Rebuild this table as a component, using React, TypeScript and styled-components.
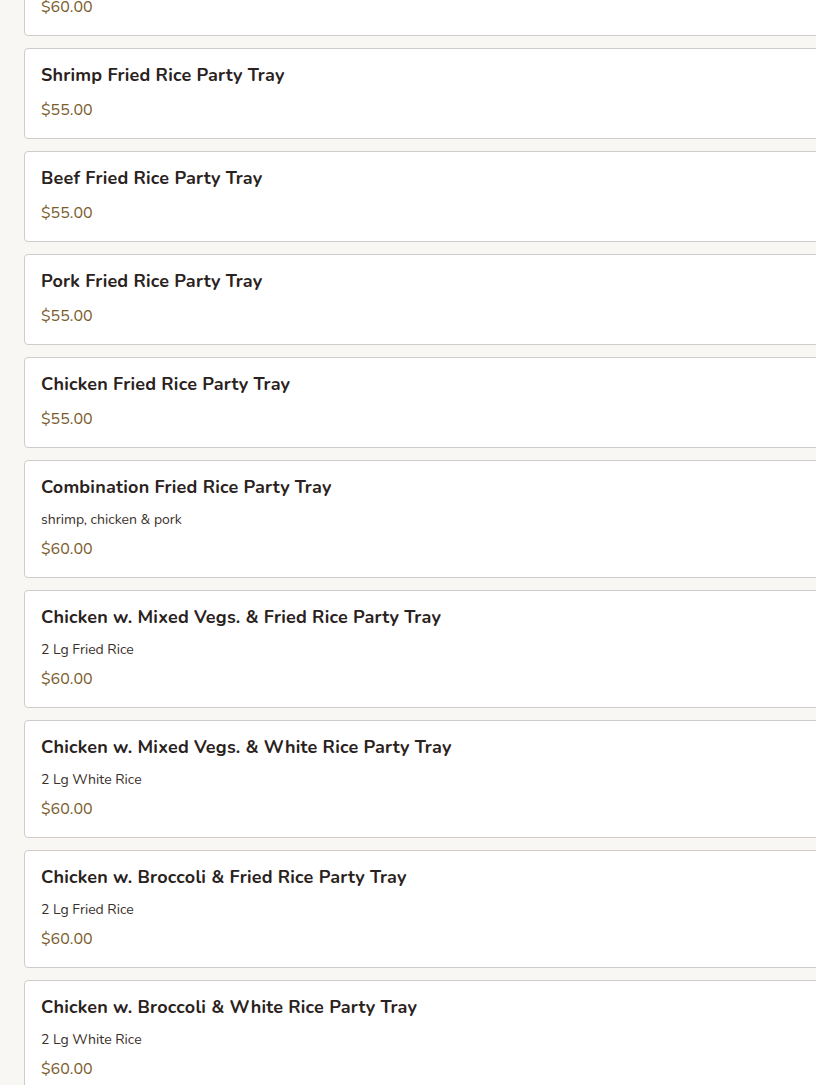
import React from "react";
import styled, { createGlobalStyle } from "styled-components";

const Global = createGlobalStyle`
  html, body { margin: 0; padding: 0; background: #f8f7f4; overflow: hidden; }
  body { font-family: "Nunito", "Lato", "Noto Sans", sans-serif; }
`;

const List = styled.div`
  display: flex;
  flex-direction: column;
  gap: 12px;
  margin: -55px 0 0 24px;
  width: 1000px;
`;

const Card = styled.div`
  background: #ffffff;
  border: 1px solid #cfcccb;
  border-radius: 4px;
  padding: 15px 16px 18px;
  display: flex;
  flex-direction: column;
`;

const Title = styled.div`
  font-size: 18px;
  font-weight: 700;
  color: #2a2220;
  line-height: 22px;
  letter-spacing: 0.2px;
`;

const Desc = styled.div`
  font-size: 14px;
  color: #3a2f2b;
  line-height: 18px;
  margin-top: 13px;
`;

const Price = styled.div<{ $hasDesc: boolean }>`
  font-size: 16px;
  color: #7a5b2c;
  line-height: 20px;
  margin-top: ${(p) => (p.$hasDesc ? "10px" : "14px")};
`;

const items: { title: string; desc?: string; price: string }[] = [
  { title: "House Special Fried Rice Party Tray", price: "$60.00" },
  { title: "Shrimp Fried Rice Party Tray", price: "$55.00" },
  { title: "Beef Fried Rice Party Tray", price: "$55.00" },
  { title: "Pork Fried Rice Party Tray", price: "$55.00" },
  { title: "Chicken Fried Rice Party Tray", price: "$55.00" },
  { title: "Combination Fried Rice Party Tray", desc: "shrimp, chicken & pork", price: "$60.00" },
  { title: "Chicken w. Mixed Vegs. & Fried Rice Party Tray", desc: "2 Lg Fried Rice", price: "$60.00" },
  { title: "Chicken w. Mixed Vegs. & White Rice Party Tray", desc: "2 Lg White Rice", price: "$60.00" },
  { title: "Chicken w. Broccoli & Fried Rice Party Tray", desc: "2 Lg Fried Rice", price: "$60.00" },
  { title: "Chicken w. Broccoli & White Rice Party Tray", desc: "2 Lg White Rice", price: "$60.00" },
];

export default function App() {
  return (
    <>
      <Global />
      <List>
        {items.map((it, i) => (
          <Card key={i}>
            <Title>{it.title}</Title>
            {it.desc && <Desc>{it.desc}</Desc>}
            <Price $hasDesc={!!it.desc}>{it.price}</Price>
          </Card>
        ))}
      </List>
    </>
  );
}
